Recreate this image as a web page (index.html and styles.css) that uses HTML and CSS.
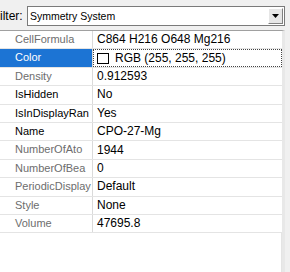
FILE: index.html
```html
<!DOCTYPE html>
<html lang="en">
<head>
  <meta charset="UTF-8" />
  <title>Properties</title>
  <link rel="stylesheet" href="styles.css">
</head>
<body>
  <div class="filter-bar">
    <span class="filter-label">ilter:</span>
    <div class="combo">
      <span class="combo-text">Symmetry System</span>
      <span class="drop-btn">
        <svg width="7" height="4" viewBox="0 0 7 4"><path d="M0 0H7L3.5 4Z" fill="#000"/></svg>
      </span>
    </div>
  </div>

  <div class="grid">
    <div class="row"><div class="name ro">CellFormula</div><div class="value">C864 H216 O648 Mg216</div></div>
    <div class="row selected"><div class="name">Color</div><div class="value focus"><span class="swatch"></span>RGB (255, 255, 255)</div></div>
    <div class="row"><div class="name ro">Density</div><div class="value">0.912593</div></div>
    <div class="row"><div class="name">IsHidden</div><div class="value">No</div></div>
    <div class="row"><div class="name">IsInDisplayRan</div><div class="value">Yes</div></div>
    <div class="row"><div class="name">Name</div><div class="value">CPO-27-Mg</div></div>
    <div class="row"><div class="name ro">NumberOfAto</div><div class="value">1944</div></div>
    <div class="row"><div class="name ro">NumberOfBea</div><div class="value">0</div></div>
    <div class="row"><div class="name ro">PeriodicDisplay</div><div class="value">Default</div></div>
    <div class="row"><div class="name ro">Style</div><div class="value">None</div></div>
    <div class="row"><div class="name ro">Volume</div><div class="value">47695.8</div></div>
    <div class="filler"></div>
  </div>
</body>
</html>
```

FILE: styles.css
```css
* { box-sizing: border-box; }
html, body { height: 100%; }
body { margin: 0; background: #f0f0f0; font-family: 'Liberation Sans', Arial, sans-serif; color: #000; display: flex; flex-direction: column; overflow: hidden; }

.filter-bar { height: 30px; display: flex; align-items: flex-start; padding-top: 6px; }
.filter-label { width: 27px; font-size: 12px; line-height: 20px; }
.combo { width: 258px; height: 20px; border: 1px solid #7a7a7a; background: #fff; display: flex; align-items: center; padding-left: 2px; padding-right: 1px; }
.combo-text { flex: 1; font-size: 10.5px; }
.drop-btn { width: 15px; height: 16px; background: #e6e6e6; border: 1px solid; border-color: #fff #808080 #808080 #fff; display: flex; align-items: center; justify-content: center; }

.grid { flex: 1; width: 285px; background: #fff; border-top: 1px solid #a0a0a0; border-right: 3px solid #e8e8e8; display: flex; flex-direction: column; }
.row { height: 18.4px; display: grid; grid-template-columns: 93px 1fr; border-bottom: 1px solid #e4e4e4; flex-shrink: 0; }
.name { padding-left: 15px; font-size: 11px; line-height: 17px; white-space: nowrap; overflow: hidden; border-right: 1px solid #dadada; }
.name.ro { color: #6d6d6d; }
.value { padding-left: 4px; font-size: 12px; line-height: 17px; white-space: nowrap; overflow: hidden; display: flex; align-items: center; }
.selected .name { background: #1c74d4; color: #fff; }
.value.focus { outline: 1px dotted #444; outline-offset: -1px; }
.swatch { width: 12px; height: 11px; border: 1px solid #000; background: #fff; margin-right: 6px; flex-shrink: 0; }
.filler { flex: 1; border-right: 1px solid #e4e4e4; }
```
